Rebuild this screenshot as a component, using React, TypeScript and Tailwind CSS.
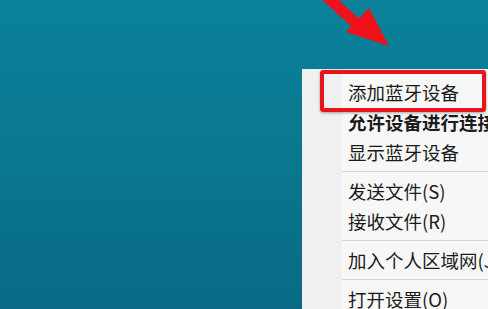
import React from 'react'

type Row = { label: string; bold?: boolean } | 'sep'

const rows: Row[] = [
  { label: '添加蓝牙设备' },
  { label: '允许设备进行连接', bold: true },
  { label: '显示蓝牙设备' },
  'sep',
  { label: '发送文件(S)' },
  { label: '接收文件(R)' },
  'sep',
  { label: '加入个人区域网(J)' },
  'sep',
  { label: '打开设置(O)' },
]

// 红色标注箭头
function Arrow() {
  return (
    <svg className="absolute left-0 top-0" width="488" height="60" viewBox="0 0 488 60">
      <line x1="322" y1="-8" x2="360" y2="27" stroke="#f0121b" strokeWidth="11" />
      <polygon points="346,32 369,8 389,46" fill="#f0121b" />
    </svg>
  )
}

export default function App() {
  return (
    <div
      className="relative w-[488px] h-[309px] overflow-hidden bg-[linear-gradient(180deg,#0b819a_0%,#0a7790_50%,#0a6a85_100%)] pl-[302px] pt-[69px]"
      style={{ fontFamily: '"Noto Sans CJK SC", "Noto Sans", sans-serif' }}
    >
      <Arrow />

      {/* 右键菜单 */}
      <div className="flex w-[200px] bg-[#f7f7f7] pt-2 pb-4">
        <div className="w-10 shrink-0 bg-[#f0f0f0] -mt-2 -mb-4" />
        <div className="flex flex-col flex-1 min-w-0">
          {rows.map((row, i) =>
            row === 'sep' ? (
              <div key={i} className="h-[9px] flex items-center">
                <div className="h-px w-full bg-[#d6d6d6]" />
              </div>
            ) : (
              <div
                key={i}
                className={`h-[30px] flex items-center pl-[6px] whitespace-nowrap text-[18.5px] leading-none text-[#1b1b1b] ${
                  row.bold ? 'font-bold' : ''
                }`}
              >
                {row.label}
              </div>
            )
          )}
        </div>
      </div>

      {/* 红框标注 */}
      <div className="absolute left-[320px] top-[70px] w-[166px] h-[42px] border-[4px] border-[#e8141c] rounded-[3px] shadow-[0_1px_3px_rgba(0,0,0,0.35)]" />
    </div>
  )
}
